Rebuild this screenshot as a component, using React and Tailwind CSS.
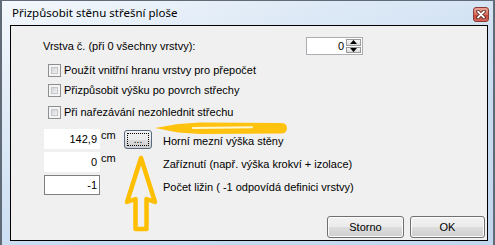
import React from 'react';

const ui = "font-['Liberation_Sans',Arial,sans-serif] text-[11px] leading-[13px] text-black";
const btnBg = 'bg-[linear-gradient(to_bottom,#f2f2f2_0%,#ebebeb_50%,#dddddd_51%,#cfcfcf_100%)]';

function Checkbox({ label }) {
    return (
        <div className="flex items-center h-[20px] pl-[37px]">
            <div className="w-[13px] h-[13px] border border-[#8e8f8f] bg-[#f4f4f4] p-[2px]">
                <div className="w-full h-full border border-[#c3c6cb] bg-gradient-to-br from-[#d0d3d8] to-[#f3f3f3]" />
            </div>
            <span className="ml-[3px]">{label}</span>
        </div>
    );
}

function Button({ children, width }) {
    return (
        <button className={`${width} h-[22px] rounded-[3px] border border-[#707070] ${btnBg} shadow-[inset_0_0_0_1px_#fbfbfb] ${ui} flex items-center justify-center`}>
            {children}
        </button>
    );
}

function ValueRow({ value, unit, bordered, withButton, label }) {
    return (
        <div className="flex items-center h-[20px] pl-[33px]">
            <div className={`w-[56px] h-[20px] bg-white border ${bordered ? 'border-[#7f7f7f]' : 'border-white'} flex items-center justify-end pr-[2px]`}>
                {value}
            </div>
            <div className="w-[24px] self-start pl-[1px]">{unit}</div>
            {withButton ? (
                <div className={`w-[28px] h-[19px] mt-[1px] rounded-[3px] border border-[#5a6a7e] ${btnBg} p-[2px] flex`}>
                    <div className="flex-1 border border-dotted border-black flex items-end justify-center text-[10px] leading-[10px]">...</div>
                </div>
            ) : (
                <div className="w-[28px]" />
            )}
            <span className="ml-[11px] mt-[4px]">{label}</span>
        </div>
    );
}

export default function App() {
    return (
        <div className={`relative w-[495px] h-[245px] overflow-hidden ${ui}`}>
            <div className="h-full flex flex-col border-x-2 border-t border-[#616b78] bg-[linear-gradient(160deg,#f4f8fc_0%,#dde9f6_30%,#c8dcf1_65%,#c2d7ee_100%)]">
                {/* Title bar */}
                <div className="h-[24px] flex items-start pl-[10px] pr-[4px]">
                    <span className="mt-[5px] font-['Noto_Sans',sans-serif] text-[11.5px] leading-[14px]">Přizpůsobit stěnu střešní ploše</span>
                    <div className="ml-auto mt-[6px] w-[16px] h-[15px] rounded-[3px] border border-[#8a3b33] bg-[linear-gradient(to_bottom,#eaa496_0%,#d8705f_50%,#c6493a_55%,#d0675a_100%)] flex items-center justify-center">
                        <svg width="10" height="9" viewBox="0 0 10 9">
                            <path d="M2 1.5 L8 7.5 M8 1.5 L2 7.5" stroke="#4a1a14" strokeWidth="3.4" strokeLinecap="round" />
                            <path d="M2 1.5 L8 7.5 M8 1.5 L2 7.5" stroke="#ffffff" strokeWidth="1.8" strokeLinecap="round" />
                        </svg>
                    </div>
                </div>

                {/* Client area */}
                <div className="flex-1 pl-[8px] pr-[5px] pb-[4px] flex">
                    <div className="flex-1 border border-black bg-[#f0f0f0] flex flex-col">
                        <div className="flex items-center h-[18px] mt-[11px]">
                            <span className="pl-[32px] w-[295px]">Vrstva č. (při 0 všechny vrstvy):</span>
                            <div className="w-[57px] h-[18px] bg-white border border-[#abadb3] flex">
                                <div className="flex-1 flex items-center justify-end pr-[2px]">0</div>
                                <div className="w-[16px] flex flex-col gap-[1px] p-[1px] pl-0">
                                    <div className="flex-1 border border-[#9a9a9a] bg-gradient-to-b from-[#f6f6f6] to-[#dcdcdc] flex items-center justify-center">
                                        <svg width="7" height="4" viewBox="0 0 7 4"><path d="M3.5 0 L7 4 L0 4 Z" fill="#000" /></svg>
                                    </div>
                                    <div className="flex-1 border border-[#9a9a9a] bg-gradient-to-b from-[#f6f6f6] to-[#dcdcdc] flex items-center justify-center">
                                        <svg width="7" height="4" viewBox="0 0 7 4"><path d="M0 0 L7 0 L3.5 4 Z" fill="#000" /></svg>
                                    </div>
                                </div>
                            </div>
                        </div>

                        <div className="mt-[5px]">
                            <Checkbox label="Použít vnitřní hranu vrstvy pro přepočet" />
                            <Checkbox label="Přizpůsobit výšku po povrch střechy" />
                        </div>
                        <div className="mt-[2px]">
                            <Checkbox label="Při nařezávání nezohlednit střechu" />
                        </div>

                        <div className="mt-[7px] flex flex-col gap-[3px]">
                            <ValueRow value="142,9" unit="cm" withButton label="Horní mezní výška stěny" />
                            <ValueRow value="0" unit="cm" label="Zaříznutí (např. výška krokví + izolace)" />
                            <ValueRow value="-1" bordered label="Počet ližin ( -1 odpovídá definici vrstvy)" />
                        </div>

                        <div className="mt-auto mb-[2px] mr-[2px] flex justify-end gap-[6px]">
                            <Button width="w-[77px]">Storno</Button>
                            <Button width="w-[75px]">OK</Button>
                        </div>
                    </div>
                </div>
            </div>

            {/* Yellow annotation arrows drawn over the dialog */}
            <svg className="absolute inset-0 pointer-events-none" width="495" height="245" viewBox="0 0 495 245">
                <path d="M155 128 L178 124 L200 122.5 L281 123 Q287 123 287 128 Q287 133.5 281 133.5 L200 134 L178 132.5 Z" fill="#ffc20e" />
                <path d="M193 128 L252 127.3" stroke="#fff6d0" strokeWidth="2" strokeLinecap="round" />
                <polygon points="141,158 155,202 146.5,199 146.5,229 135.5,229 135.5,199 127,202" fill="none" stroke="#ffbf00" strokeWidth="4.5" strokeLinejoin="round" />
            </svg>
        </div>
    );
}
